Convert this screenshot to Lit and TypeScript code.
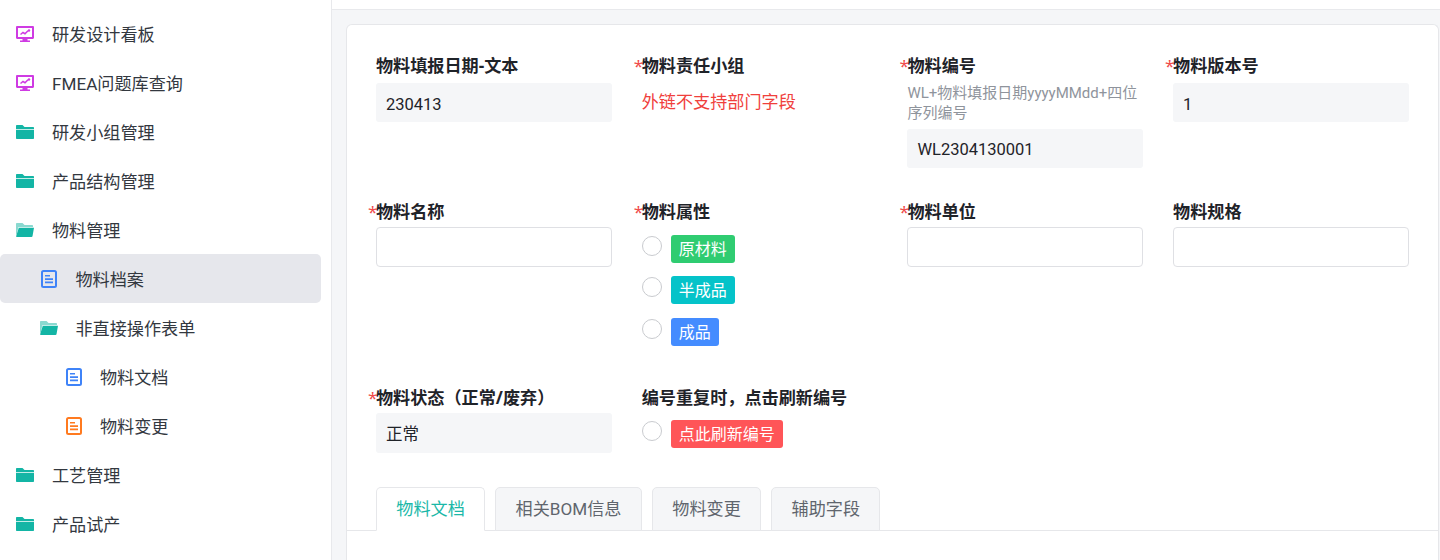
import { LitElement, html, css, svg } from "lit";
import { customElement } from "lit/decorators.js";

const monitor = svg`<svg class="ic" width="18" height="17" viewBox="0 0 18 17"><path fill="#cf3be3" fill-rule="evenodd" d="M1.200 0h15.600C17.500 0 18 .5 18 1.200v10.600c0 .7-.5 1.200-1.200 1.200H11.500v1.500h2.500V16H4v-1.500h2.500V13H1.200C.5 13 0 12.500 0 11.800V1.200C0 .5.500 0 1.200 0zM2 2v9h14V2z"/><path fill="none" stroke="#cf3be3" stroke-width="1.500" d="M4.500 8.500 7 6.500l2 1.200 3-3"/><circle cx="13" cy="4.500" r="1.200" fill="#cf3be3"/></svg>`;
const folder = svg`<svg class="ic" width="18" height="14" viewBox="0 0 18 14"><path fill="#13b5a5" d="M1 0h5.500l2 2H17c.6 0 1 .4 1 1v1H0V1c0-.6.4-1 1-1z"/><path fill="#13b5a5" d="M0 4.800h18V13c0 .6-.4 1-1 1H1c-.6 0-1-.4-1-1z"/></svg>`;
const folderOpen = svg`<svg class="ic" width="18" height="14" viewBox="0 0 18 14"><path fill="#8ad9d0" d="M1 0h5.500l2 2H16c.6 0 1 .4 1 1v1H2.500L.8 11 0 12V1c0-.6.4-1 1-1z"/><path fill="#13b5a5" d="M2.800 4.800H18l-1.500 8.400c-.1.500-.5.800-1 .8H1c-.6 0-1-.5-.8-1z"/></svg>`;
const doc = (c: string) => svg`<svg class="ic" width="16" height="18" viewBox="0 0 16 18"><rect x="1" y="1" width="14" height="16" rx="1.500" fill="none" stroke="${c}" stroke-width="2"/><path fill="${c}" d="M4 5h5v1.600H4zM4 8.300h8v1.600H4zM4 11.600h8v1.600H4z"/></svg>`;

const blue = "#3f83f8";
const orange = "#ff7a1f";
const menu: { t: string; i: unknown; l: number; a?: boolean }[] = [
  { t: "研发设计看板", i: monitor, l: 0 },
  { t: "FMEA问题库查询", i: monitor, l: 0 },
  { t: "研发小组管理", i: folder, l: 0 },
  { t: "产品结构管理", i: folder, l: 0 },
  { t: "物料管理", i: folderOpen, l: 0 },
  { t: "物料档案", i: doc(blue), l: 1, a: true },
  { t: "非直接操作表单", i: folderOpen, l: 1 },
  { t: "物料文档", i: doc(blue), l: 2 },
  { t: "物料变更", i: doc(orange), l: 2 },
  { t: "工艺管理", i: folder, l: 0 },
  { t: "产品试产", i: folder, l: 0 },
];

@customElement("app-root")
export class AppRoot extends LitElement {
  static styles = css`
    :host {
      display: flex;
      width: 1440px;
      height: 560px;
      overflow: hidden;
      background: #f5f6f8;
      color: #1f2329;
      font-family: Roboto, "Noto Sans CJK SC", sans-serif;
      font-size: 17.140px;
    }
    * { box-sizing: border-box; }
    .side {
      width: 332px;
      flex: none;
      background: #fff;
      border-right: 1px solid #e8e9ec;
      padding: 9px 10px 0 0;
    }
    .item {
      height: 49px;
      display: flex;
      align-items: center;
      padding-left: 16px;
      padding-top: 1px;
      border-radius: 5px;
      color: #33383f;
      line-height: 1;
    }
    .tx { margin-top: 3px; }
    .item .ib { width: 18px; margin-right: 18px; display: flex; justify-content: center; flex: none; }
    .l1 { padding-left: 40.500px; }
    .l2 { padding-left: 65px; }
    .item.a { background: #e6e7ec; }
    .l1 .ib, .l2 .ib { width: 17px; margin-right: 18px; }
    .ic { display: block; flex: none; }
    .main { flex: 1; min-width: 0; display: flex; flex-direction: column; }
    .top { height: 10px; flex: none; background: #fff; border-bottom: 1px solid #e8e9ec; }
    .card {
      flex: 1;
      margin: 14px 1px 0 14px;
      background: #fff;
      border: 1px solid #e6e7ea;
      border-bottom: 0;
      border-radius: 6px 6px 0 0;
      padding-top: 30px;
    }
    .row {
      display: grid;
      grid-template-columns: repeat(4, 1fr);
      column-gap: 29.800px;
      padding: 0 29px;
    }
    .r2 { margin-top: 33px; }
    .r3 { margin-top: 41px; }
    .lab {
      position: relative;
      display: block;
      font-family: "Noto Sans", "Noto Sans CJK SC", sans-serif;
      font-weight: 700;
      line-height: 21px;
      height: 21px;
      margin-bottom: 5px;
    }
    .r1 .lab { margin-bottom: 7px; }
    .star {
      position: absolute;
      left: -8px;
      top: 0;
      font-weight: 400;
      color: #f04b4b;
    }
    .input {
      height: 40px;
      border-radius: 3px;
      background: #f5f6f8;
      padding: 0 10px;
      line-height: 43px;
      font-size: 16.500px;
    }
    .r1 .input { height: 39px; line-height: 43px; }
    .r1 .hint + .input { line-height: 42px; }
    .input.empty { background: #fff; border: 1.500px solid #dfe0e4; border-radius: 4px; }
    .hint { font-size: 15px; line-height: 20px; color: #8f949c; margin: 0 0 6px; }
    .err { color: #f0403c; line-height: 40px; margin-top: -1px; }
    .opts { display: flex; flex-direction: column; gap: 13.400px; margin-top: 13px; }
    .r3 .opts { margin-top: 12px; }
    .opt { display: flex; align-items: flex-start; gap: 9px; }
    .radio {
      width: 20px;
      height: 20px;
      border-radius: 50%;
      border: 1.500px solid #c9cbcf;
      background: #fff;
      margin-top: 1px;
      flex: none;
    }
    .tag {
      height: 28px;
      padding: 0 8px;
      line-height: 29px;
      border-radius: 3px;
      color: #fff;
      font-size: 16px;
    }
    .green { background: #2fcc71; }
    .cyan { background: #05c3c9; }
    .bl { background: #448cff; }
    .red { background: #ff5558; }
    .tabs {
      margin-top: 34px;
      padding-left: 29px;
      display: flex;
      gap: 10.200px;
      height: 44px;
      border-bottom: 1.500px solid #e6e7ea;
    }
    .tab {
      height: 44px;
      padding: 0 19.300px;
      border: 1.500px solid #e6e7ea;
      border-radius: 5px 5px 0 0;
      background: #f5f6f8;
      color: #60656d;
      line-height: 42px;
    }
    .tab.on { background: #fff; border-bottom-color: #fff; color: #1bb8a8; }
  `;

  private field(label: string, req: boolean, body: unknown) {
    return html`<div>
      <label class="lab">${req ? html`<span class="star">*</span>` : ""}${label}</label>
      ${body}
    </div>`;
  }

  render() {
    return html`
      <aside class="side">
        ${menu.map(
          (m) => html`<div class="item l${m.l} ${m.a ? "a" : ""}"><span class="ib">${m.i}</span><span class="tx">${m.t}</span></div>`
        )}
      </aside>
      <div class="main">
        <div class="top"></div>
        <div class="card">
          <div class="row r1">
            ${this.field("物料填报日期-文本", false, html`<div class="input">230413</div>`)}
            ${this.field("物料责任小组", true, html`<div class="err">外链不支持部门字段</div>`)}
            ${this.field(
              "物料编号",
              true,
              html`<p class="hint">WL+物料填报日期yyyyMMdd+四位序列编号</p><div class="input">WL2304130001</div>`
            )}
            ${this.field("物料版本号", true, html`<div class="input">1</div>`)}
          </div>
          <div class="row r2">
            ${this.field("物料名称", true, html`<div class="input empty"></div>`)}
            ${this.field(
              "物料属性",
              true,
              html`<div class="opts">
                <div class="opt"><span class="radio"></span><span class="tag green">原材料</span></div>
                <div class="opt"><span class="radio"></span><span class="tag cyan">半成品</span></div>
                <div class="opt"><span class="radio"></span><span class="tag bl">成品</span></div>
              </div>`
            )}
            ${this.field("物料单位", true, html`<div class="input empty"></div>`)}
            ${this.field("物料规格", false, html`<div class="input empty"></div>`)}
          </div>
          <div class="row r3">
            ${this.field("物料状态（正常/废弃）", true, html`<div class="input">正常</div>`)}
            ${this.field(
              "编号重复时，点击刷新编号",
              false,
              html`<div class="opts">
                <div class="opt"><span class="radio"></span><span class="tag red">点此刷新编号</span></div>
              </div>`
            )}
          </div>
          <div class="tabs">
            <div class="tab on">物料文档</div>
            <div class="tab">相关BOM信息</div>
            <div class="tab">物料变更</div>
            <div class="tab">辅助字段</div>
          </div>
        </div>
      </div>
    `;
  }
}
